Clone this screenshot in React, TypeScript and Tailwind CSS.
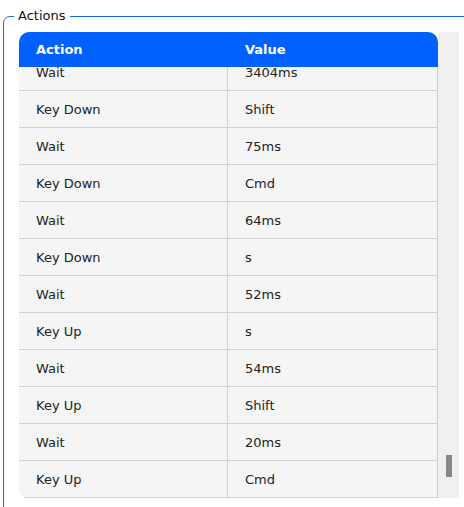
import React from 'react';

const rows: [string, string][] = [
  ['Wait', '3404ms'],
  ['Key Down', 'Shift'],
  ['Wait', '75ms'],
  ['Key Down', 'Cmd'],
  ['Wait', '64ms'],
  ['Key Down', 's'],
  ['Wait', '52ms'],
  ['Key Up', 's'],
  ['Wait', '54ms'],
  ['Key Up', 'Shift'],
  ['Wait', '20ms'],
  ['Key Up', 'Cmd'],
];

export default function App() {
  return (
    <div
      className="w-[464px] h-[507px] overflow-hidden bg-white text-[13px] text-[#222]"
      style={{ fontFamily: '"DejaVu Sans", Verdana, sans-serif' }}
    >
      <fieldset className="ml-[3px] mt-[8px] w-[500px] h-[520px] border border-[#1a66f0] rounded-tl-[7px] pl-[10px] pt-[8px] m-0">
        <legend className="px-1 leading-[16px] text-[13px] text-[#111]">Actions</legend>
        <div className="ml-[5px] flex w-[440px] h-[466px]">
          <div className="flex flex-col w-[419px]">
            <div className="flex h-[35px] shrink-0 bg-[#0061fe] rounded-t-[10px] text-white font-bold items-center">
              <div className="w-[209px] pl-[17px]">Action</div>
              <div className="pl-[17px]">Value</div>
            </div>
            <div className="h-[431px] overflow-hidden border-r border-[#d0d0d0] rounded-bl-[8px]">
              <div className="-mt-[13px]">
                {rows.map(([action, value], i) => (
                  <div key={i} className="flex h-[37px] bg-[#f5f5f5] border-b border-[#d2d2d2]">
                    <div className="w-[209px] flex items-center pt-[2px] pl-[17px] border-r border-[#d2d2d2]">{action}</div>
                    <div className="flex items-center pt-[2px] pl-[17px]">{value}</div>
                  </div>
                ))}
              </div>
            </div>
          </div>
          <div className="relative w-[21px] bg-[#f0f0f0]">
            <div className="absolute left-[8px] top-[423px] w-[6px] h-[22px] bg-[#888]" />
          </div>
        </div>
      </fieldset>
    </div>
  );
}
